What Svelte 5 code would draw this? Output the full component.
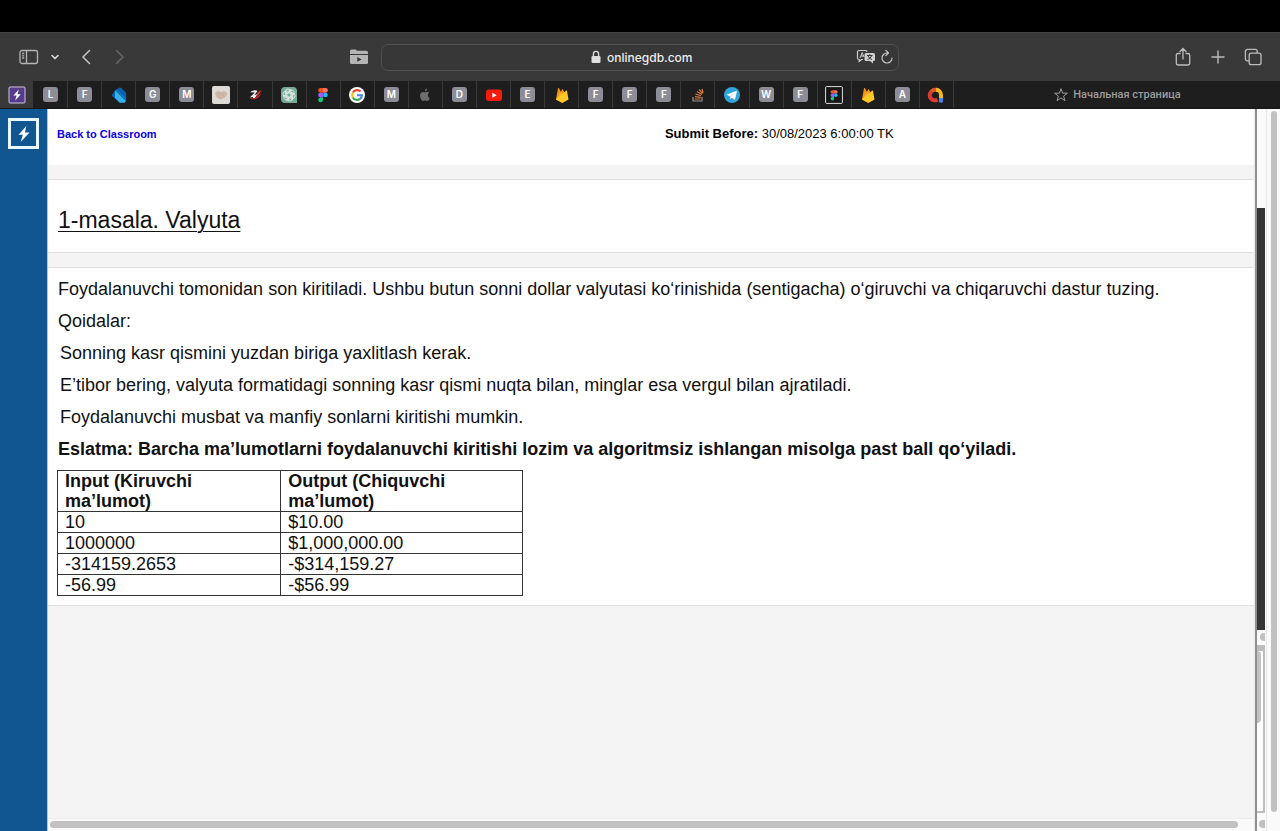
<script>
  const tabs = [
    'bolt', 'L', 'F', 'dart', 'G', 'M', 'hands', 'swirl', 'chat', 'figma', 'google', 'M', 'apple', 'D',
    'youtube', 'E', 'firebase', 'F', 'F', 'F', 'stack', 'telegram', 'W', 'F', 'figmabox', 'firebase', 'A', 'arc'
  ];
  const rules = [
    'Sonning kasr qismini yuzdan biriga yaxlitlash kerak.',
    'E’tibor bering, valyuta formatidagi sonning kasr qismi nuqta bilan, minglar esa vergul bilan ajratiladi.',
    'Foydalanuvchi musbat va manfiy sonlarni kiritishi mumkin.'
  ];
  const samples = [
    ['10', '$10.00'],
    ['1000000', '$1,000,000.00'],
    ['-314159.2653', '-$314,159.27'],
    ['-56.99', '-$56.99']
  ];
  let address = $state('onlinegdb.com');
</script>

{#snippet figmaMark()}
  <path d="M6.500 2H9v4.700H6.500a2.350 2.350 0 0 1 0-4.700z" fill="#f24e1e" />
  <path d="M9 2h2.500a2.350 2.350 0 0 1 0 4.700H9z" fill="#ff7262" />
  <path d="M6.500 6.700H9v4.700H6.500a2.350 2.350 0 0 1 0-4.700z" fill="#a259ff" />
  <circle cx="11.400" cy="9" r="2.350" fill="#1abcfe" />
  <path d="M6.500 11.400H9v2.300a2.400 2.400 0 1 1-2.500-2.300z" fill="#0acf83" />
{/snippet}

{#snippet favicon(kind)}
  <svg class="favicon" viewBox="0 0 18 18" aria-hidden="true">
    {#if kind === 'bolt'}
      <rect x="1" y="1" width="16" height="16" rx="1" fill="#563b8c" stroke="#cfc4df" />
      <path d="M10.800 3.500 5.300 9.600h3.200l-1.300 5 5.600-6.400H9.600z" fill="#fff" />
    {:else if kind === 'dart'}
      <path d="M2 9 5.500 4 9.500 1.500l2 .5 4.700 5v8L9.500 17z" fill="#0b5fae" />
      <path d="M5 4.500 16 14.500V12L7 3.500z" fill="#0b78c4" />
      <path d="M5 4.500V12l5 4.800h4.500l1.500-1.600z" fill="#35b3ee" />
      <path d="M1.800 9.700 5 4.500V12.500z" fill="#0868ac" />
    {:else if kind === 'hands'}
      <rect x="0" y="0" width="18" height="18" rx="2" fill="#ddd9d4" />
      <path d="M3 7 6 4.800l3 1.500 3-1.500L15.500 7.500l-1.500 3-5 3.300-4.500-2.600z" fill="#ceb8a4" />
      <path d="m5 9 3.500-2.200 4 3.800M6 11l2 1.500" stroke="#c4ab95" fill="none" />
    {:else if kind === 'swirl'}
      <path d="M3.500 12C7.500 15 14 12.500 15 7.500l-2.500 2.200L8 12.500z" fill="#c52924" />
      <path d="M4 6.300C7.500 3.800 10.500 4 11.500 5l-3.200 4.300 3.900-1.800-2.800 3.800c-1 1.300-3 1.300-2.300-.3l-3.300.4L8.800 6.500z" fill="#eee" />
      <path d="m11.500 6.500 4-2.700-2 4.200-3.500 3z" fill="#d6352e" />
    {:else if kind === 'chat'}
      <path d="M5 1h8a4 4 0 0 1 4 4v12H5a4 4 0 0 1-4-4V5a4 4 0 0 1 4-4z" fill="#75a895" />
      <g fill="none" stroke="#e0eee8" stroke-width=".9">
        {#each [0, 60, 120, 180, 240, 300] as angle}
          <path transform="rotate({angle} 9 9)" d="M7 9.900V6l3.200-1.900a2.600 2.600 0 0 1 3.800 2.400v2.200L10.600 7" />
        {/each}
      </g>
    {:else if kind === 'figma'}
      {@render figmaMark()}
    {:else if kind === 'figmabox'}
      <rect x=".6" y=".6" width="16.800" height="16.800" rx="1" fill="#171717" stroke="#dedede" />
      <g transform="translate(2.500 2.700) scale(.73)">{@render figmaMark()}</g>
    {:else if kind === 'google'}
      <circle cx="9" cy="9" r="8" fill="#fff" />
      <g fill="none" stroke-width="2.100">
        <path d="M4.800 6.600A4.900 4.900 0 0 1 12.600 5.600" stroke="#ea4335" />
        <path d="M4.800 6.600a4.900 4.900 0 0 0 0 4.800" stroke="#fbbc05" />
        <path d="M4.800 11.400a4.900 4.900 0 0 0 7.300 1.500" stroke="#34a853" />
        <path d="M12.100 12.900a4.700 4.700 0 0 0 1.800-3.700H9" stroke="#4285f4" />
      </g>
    {:else if kind === 'apple'}
      <path d="M11.900 8.900c0-1.300.9-1.900 1.200-2.200-.9-1.200-2.500-1.100-3.700-.5-.6.300-1-.3-2-.3C5.200 5.900 4 7.500 4 9.500 4 11.600 5.600 15 7.200 15c.8 0 1.100-.5 2-.5s1.200.5 2 .5c1.300 0 2.200-2 2.500-3-.9-.4-1.800-1.400-1.800-3.100zM11.200 2.500c-1.300.1-2.400 1.200-2.300 2.700 1.300 0 2.400-1.300 2.300-2.700z" fill="#6d6d6d" />
    {:else if kind === 'youtube'}
      <rect x="1" y="3.500" width="16" height="11.500" rx="3" fill="#f61c0d" />
      <path d="m7.400 6.800 4.300 2.400-4.300 2.500z" fill="#fff" />
    {:else if kind === 'firebase'}
      <path d="M3 13.500 5 2.300c.1-.5.700-.5.900-.1l2 3.500L9 3.500c.2-.4.700-.4.900 0l5.100 10-5.600 3.200z" fill="#f79412" />
      <path d="m3 13.500 5.200-8 2.500 3.600z" fill="#ffad25" />
      <path d="m3 13.500 10-8.800c.4-.4.900-.2 1 .3l1.500 8.500-5.500 3c-.6.300-1 .3-1.600 0z" fill="#ffca28" />
    {:else if kind === 'stack'}
      <path d="M4 11v4h9v-4" fill="none" stroke="#969696" stroke-width="1.200" />
      <path d="M5.700 13h5.800M5.900 10.700l5.700.7M6.500 8l5.500 1.800M8 5.500l4.800 3M10.200 3.500l3.400 4.200M13 3l1 4" fill="none" stroke="#d9793a" stroke-width="1.200" />
    {:else if kind === 'telegram'}
      <circle cx="9" cy="9" r="8" fill="#32a4dc" />
      <path d="m3.500 8.800 9.600-3.900c.5-.2.900.1.700.8l-1.600 7.400c-.1.500-.5.700-1 .4l-2.400-1.800-1.400 1.300-.6-2.700z" fill="#fff" />
      <path d="m6.800 10.200 5.300-3.600-4.300 4.500-.4 1.900z" fill="#b8dcef" />
    {:else}
      <g fill="none" stroke-width="4">
        <path d="M10.500 13.500a5 5 0 0 1-6.300-7.700" stroke="#dd3b36" />
        <path d="M4.200 5.800a5 5 0 0 1 5-2" stroke="#e8532f" />
        <path d="M9 3.800A5.200 5.200 0 0 1 14 9v3.500" stroke="#f9b918" />
        <path d="M14 12v4.500" stroke="#4285f4" />
      </g>
    {/if}
  </svg>
{/snippet}

<div class="window">
  <div class="menu-strip"></div>
  <header class="toolbar">
    <div class="group">
      <button aria-label="Sidebar" class="sidebar-toggle">
        <svg width="20" height="16" viewBox="0 0 20 16" fill="none" stroke="#b4b4b4" stroke-width="1.300"><rect x="1" y="1.500" width="17.500" height="13" rx="2" /><path d="M7.500 1.500v13M3.200 4.500h2M3.200 6.800h2M3.200 9h2" /></svg>
      </button>
      <button aria-label="Tab groups" class="groups">
        <svg width="10" height="8" viewBox="0 0 10 8" fill="none" stroke="#e0e0e0" stroke-width="1.500" stroke-linecap="round"><path d="m2 2.500 3 3 3-3" /></svg>
      </button>
      <button aria-label="Back" class="back">
        <svg width="12" height="16" viewBox="0 0 12 16" fill="none" stroke="#c4c4c4" stroke-width="1.500" stroke-linecap="round"><path d="M9.500 1.500 3 8l6.500 6.500" /></svg>
      </button>
      <button aria-label="Forward" class="forward">
        <svg width="12" height="16" viewBox="0 0 12 16" fill="none" stroke="#666" stroke-width="1.500" stroke-linecap="round"><path d="M2.500 1.500 9 8l-6.500 6.500" /></svg>
      </button>
      <button aria-label="Media folder" class="folder">
        <svg width="20" height="18" viewBox="0 0 20 18"><path d="M1 6V3a1.600 1.600 0 0 1 1.600-1.600h4L8 2.800h9.400A1.600 1.600 0 0 1 19 4.400V6z" fill="#b5b5b5" /><path d="M1 7h18v7.500a1.600 1.600 0 0 1-1.600 1.600H2.600A1.600 1.600 0 0 1 1 14.500z" fill="#b5b5b5" /><path d="m8.300 9 4.200 2.400-4.200 2.400z" fill="#353535" /></svg>
      </button>
    </div>
    <div class="address">
      <label class="location">
        <svg width="10" height="14" viewBox="0 0 10 14" role="img" aria-label="Address"><rect x=".5" y="6" width="9" height="7" rx="1.200" fill="#dedede" /><path d="M2.400 6.500V4a2.600 2.600 0 0 1 5.200 0v2.500" fill="none" stroke="#dedede" stroke-width="1.300" /></svg>
        <input type="text" bind:value={address} />
      </label>
      <button aria-label="Translate">
        <svg width="20" height="16" viewBox="0 0 20 16"><path d="M3 1.500h6.500A1.500 1.500 0 0 1 11 3M7 10.500H5.500l-2.300 2v-2A1.700 1.700 0 0 1 1.500 9V3A1.500 1.500 0 0 1 3 1.500" fill="none" stroke="#cecece" stroke-width="1.200" /><path d="m4 9 2.200-5.500L8 8M4.700 7h2.800" fill="none" stroke="#cecece" /><path d="M10 4h7.500A1.500 1.500 0 0 1 19 5.500v5a1.500 1.500 0 0 1-1.500 1.500H17v2.500L14 12h-4a1.500 1.500 0 0 1-1.500-1.500v-5A1.500 1.500 0 0 1 10 4z" fill="#cecece" /><path d="M11 6.500h5.500M13.700 5.200v1.300M15.500 6.700c-.6 2-2 3-4 3.800M12 6.700c.8 2 2 3 4 3.800" fill="none" stroke="#393939" /></svg>
      </button>
      <button aria-label="Reload">
        <svg width="14" height="16" viewBox="0 0 14 16" fill="none" stroke="#c7c7c7" stroke-width="1.200" stroke-linecap="round" stroke-linejoin="round"><path d="M7.800 4H7a5 5 0 1 0 5 5M5.800 1.300 8.500 4 5.800 6.700" /></svg>
      </button>
    </div>
    <div class="group actions">
      <button aria-label="Share">
        <svg width="18" height="20" viewBox="0 0 18 20" fill="none" stroke="#bcbcbc" stroke-width="1.300" stroke-linecap="round"><path d="M6 6.500H4A1.700 1.700 0 0 0 2.300 8.200v8.100A1.700 1.700 0 0 0 4 18h10a1.700 1.700 0 0 0 1.700-1.700V8.200A1.700 1.700 0 0 0 14 6.500h-2M9 12V1.700M6 4.500l3-3 3 3" /></svg>
      </button>
      <button aria-label="New tab">
        <svg width="14" height="14" viewBox="0 0 14 14" stroke="#bcbcbc" stroke-width="1.400" stroke-linecap="round"><path d="M7 1v12M1 7h12" /></svg>
      </button>
      <button aria-label="Tab overview">
        <svg width="18" height="18" viewBox="0 0 18 18" fill="none" stroke="#bcbcbc" stroke-width="1.300"><rect x="5.200" y="5.200" width="11.800" height="11.500" rx="2" /><path d="M5 12.800H3.400a2 2 0 0 1-2-2V3.400a2 2 0 0 1 2-2h7.800a2 2 0 0 1 2 2V5" /></svg>
      </button>
    </div>
  </header>

  <nav class="tabs" aria-label="Tabs">
    {#each tabs as tab, i}
      <button class="tab" class:current={i === 0} aria-label="Tab {i + 1}">
        {#if tab.length === 1}<span class="letter">{tab}</span>{:else}{@render favicon(tab)}{/if}
      </button>
    {/each}
    <button class="tab home">
      <svg width="16" height="16" viewBox="0 0 16 16" fill="none" stroke="#9c9c9c" stroke-linejoin="round"><path d="m8 1.700 1.600 4.500h4.800l-3.800 2.900 1.400 4.600-4-2.800-4 2.800 1.400-4.600-3.800-2.900h4.800z" /></svg>
      Начальная страница
    </button>
  </nav>

  <div class="page">
    <aside>
      <a href="#home" aria-label="Home" class="logo">
        <svg width="16" height="18" viewBox="0 0 16 18"><path d="M10.300 1 2.500 9.700h4.300L4.700 17l8.800-9.500H9z" fill="#f2fbff" /></svg>
      </a>
    </aside>
    <div class="frame">
      <main>
        <section class="classbar">
          <a href="#classroom">Back to Classroom</a>
          <p><b>Submit Before:</b> 30/08/2023 6:00:00 TK</p>
        </section>
        <section class="panel title"><h1>1-masala. Valyuta</h1></section>
        <section class="panel task">
          <p>Foydalanuvchi tomonidan son kiritiladi. Ushbu butun sonni dollar valyutasi ko‘rinishida (sentigacha) o‘giruvchi va chiqaruvchi dastur tuzing.</p>
          <p>Qoidalar:</p>
          {#each rules as rule}<p class="rule">{rule}</p>{/each}
          <p><b>Eslatma: Barcha ma’lumotlarni foydalanuvchi kiritishi lozim va algoritmsiz ishlangan misolga past ball qo‘yiladi.</b></p>
          <table>
            <thead><tr><th>Input (Kiruvchi ma’lumot)</th><th>Output (Chiquvchi ma’lumot)</th></tr></thead>
            <tbody>
              {#each samples as [input, output]}<tr><td>{input}</td><td>{output}</td></tr>{/each}
            </tbody>
          </table>
        </section>
      </main>
      <div class="track-x"><div class="thumb"></div></div>
    </div>
    <div class="side-pane">
      <div class="pane-head"></div>
      <div class="pane-editor"></div>
      <div class="pane-scroll"><div class="thumb"></div></div>
      <div class="pane-input"><div class="thumb"></div></div>
      <div class="pane-foot"><div class="thumb"></div></div>
    </div>
    <div class="track-y"><div class="thumb"></div></div>
  </div>
</div>

<style>
  :global(body) { margin: 0; }
  .window { min-height: 100vh; display: flex; flex-direction: column; font-family: "Liberation Sans", Arial, sans-serif; color: #111; }
  .window * { box-sizing: border-box; }
  button { border: 0; padding: 0; background: none; display: flex; align-items: center; justify-content: center; }
  p, h1 { margin: 0; }
  svg { display: block; flex: none; }

  .menu-strip { height: 32px; background: #000; }
  .toolbar { height: 49px; background: #393939; border-top: 1px solid #454545; display: grid; grid-template-columns: 1fr 518px 1fr; align-items: center; }
  .group { display: flex; align-items: center; padding: 0 12px 0 19px; }
  .groups { margin-left: 11px; }
  .back { margin-left: 20px; }
  .forward { margin-left: 22px; }
  .folder { margin-left: auto; }
  .actions { justify-content: flex-end; gap: 19px; padding: 0 18px; }
  .address { height: 27px; border: 1px solid #505050; border-radius: 7px; background: #373737; display: grid; grid-template-columns: 1fr 20px 14px; gap: 4px; padding-right: 4px; align-items: center; }
  .location { display: flex; align-items: center; justify-content: center; gap: 6px; padding-left: 52px; }
  .location input { width: 88px; height: 20px; padding: 0; border: 0; outline: 0; background: none; color: #ececec; font: 500 12px Inter, sans-serif; }

  .tabs { height: 28px; background: #1e1e1e; display: grid; grid-template-columns: repeat(28, 1fr) 9.57fr; border-bottom: 1px solid #161616; }
  .tab { border-right: 1px solid #3a3a3a; }
  .tab.current { background: #393939; border-right-color: #1e1e1e; }
  .tab.home { border-right: 0; gap: 4px; color: #9c9c9c; font: 500 11px Roboto, "Noto Sans", sans-serif; }
  .favicon { width: 18px; height: 18px; }
  .letter { width: 15px; height: 15px; border-radius: 3px; background: #8d8d98; color: #fff; font: 600 10px/15px Inter, sans-serif; text-align: center; }

  .page { flex: 1; display: grid; grid-template-columns: 48px 1fr 11px 14px; background: #fafafa; }
  aside { background: #125691; border-right: 1px solid #a9c3da; padding: 9px 0 0 8px; }
  .logo { width: 31px; height: 31px; border: 3px solid #e8f8ff; display: flex; align-items: center; justify-content: center; }
  .frame { display: flex; flex-direction: column; min-width: 0; border-right: 1px solid #ececec; }
  main { flex: 1; background: #f4f4f4; }
  .classbar { height: 56px; background: #fff; display: grid; grid-template-columns: 612fr 584fr; padding: 16px 9px 0; line-height: 18px; font-size: 13px; color: #000; }
  .classbar a { color: #0a00e6; font-weight: bold; font-size: 11px; text-decoration: none; }
  .panel { margin-top: 14px; background: #fff; border: 1px solid #dedede; border-width: 1px 0; padding: 0 10px; }
  .title { padding: 26px 10px 17px; }
  h1 { font-size: 23px; line-height: 29px; font-weight: 400; text-decoration: underline; text-decoration-thickness: 1px; text-underline-offset: 3px; }
  .task { font-size: 18px; padding: 5px 9px 9px; }
  .task p { line-height: 32px; padding-left: 1px; }
  .task .rule { padding-left: 3px; }
  table { border-collapse: collapse; width: 466px; max-width: 100%; margin-top: 5px; table-layout: fixed; line-height: 20px; }
  th, td { border: 1px solid #333; padding: 0 7px; text-align: left; }
  th:first-child { width: 48%; }
  th { padding-right: 40px; }

  .thumb { background: #c1c1c1; border-radius: 4px; }
  .track-x { height: 13px; padding: 2px 16px 3px 2px; border-top: 1px solid #ececec; }
  .track-x .thumb { height: 7px; }
  .side-pane { border-left: 2px solid #8f8f8f; display: flex; flex-direction: column; padding-right: 1px; }
  .pane-head { height: 99px; }
  .pane-editor { flex: 422; background: #353535; }
  .pane-scroll { height: 15px; padding: 3px 0 3px 3px; }
  .pane-scroll .thumb, .pane-foot .thumb { height: 8px; border-radius: 4px 0 0 4px; }
  .pane-input { flex: 160; border: 2px solid #bdbdbd; border-left: 0; border-top-width: 6px; background: #fff; }
  .pane-input .thumb { width: 4px; height: 45%; border-radius: 0 4px 4px 0; }
  .pane-foot { height: 18px; padding: 7px 0 0 2px; }
  .track-y { border-left: 1px solid #e8e8e8; padding: 2px 3px 19px 4px; }
  .track-y .thumb { height: 100%; }
</style>
